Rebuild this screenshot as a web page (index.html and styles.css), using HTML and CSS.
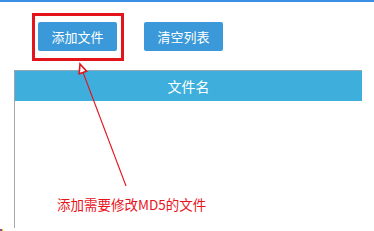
FILE: index.html
```html
<!DOCTYPE html>
<html lang="zh">
<head>
<meta charset="utf-8">
<link rel="stylesheet" href="styles.css">
</head>
<body>
<div class="page">
  <div class="topbar"></div>
  <div class="toolbar">
    <button class="btn">添加文件</button>
    <button class="btn">清空列表</button>
  </div>
  <div class="table">
    <div class="thead">文件名</div>
    <div class="tbody"></div>
  </div>
  <div class="dot"></div>
  <svg class="annot" width="374" height="231" viewBox="0 0 374 231">
    <rect x="33.5" y="14.5" width="89" height="45" fill="none" stroke="#e3141c" stroke-width="3"/>
    <line x1="126" y1="186" x2="82.5" y2="71" stroke="#e3141c" stroke-width="1.1"/>
    <polygon points="80,64 86.5,71.2 79.2,73.8" fill="#fff" stroke="#e3141c" stroke-width="1.6" stroke-linejoin="miter"/>
  </svg>
  <div class="note">添加需要修改MD5的文件</div>
</div>
</body>
</html>
```
FILE: styles.css
```css
html, body {
  margin: 0;
  padding: 0;
  background: #fff;
}
.page {
  position: relative;
  width: 374px;
  height: 231px;
  overflow: hidden;
  font-family: "Noto Sans CJK SC", "Noto Sans", sans-serif;
}
.topbar {
  height: 2px;
  background: #3a8fe4;
}
.toolbar {
  display: flex;
  gap: 27px;
  padding: 20px 0 0 38px;
}
.btn {
  width: 79px;
  height: 29px;
  border: none;
  border-radius: 2px;
  background: #3b99d9;
  color: #fff;
  font-family: inherit;
  font-size: 13px;
  padding: 0;
  line-height: 29px;
}
.table {
  margin: 19px 0 0 14px;
  width: 348px;
}
.thead {
  height: 30px;
  border-top: 1px solid #8fa6b3;
  border-left: 1px solid #9aa4aa;
  background: #3eafdc;
  color: #fff;
  font-size: 14px;
  line-height: 30px;
  text-align: center;
}
.tbody {
  height: 127px;
  border-left: 1px solid #a9a9a9;
}
.dot {
  position: absolute;
  left: 0;
  top: 229px;
  width: 3px;
  height: 2px;
  background: linear-gradient(90deg, #e33 0 1px, #36c 1px 2px, #fc0 2px 3px);
}
.annot {
  position: absolute;
  left: 0;
  top: 0;
}
.note {
  position: absolute;
  left: 57px;
  top: 195px;
  color: #e8141c;
  font-size: 13.5px;
  line-height: 18px;
  white-space: nowrap;
}
```
